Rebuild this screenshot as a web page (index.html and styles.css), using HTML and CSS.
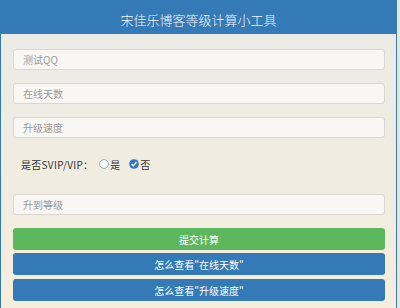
FILE: index.html
```html
<!DOCTYPE html>
<html lang="zh-CN">
<head>
  <meta charset="UTF-8" />
  <title>宋佳乐博客等级计算小工具</title>
  <link rel="stylesheet" href="styles.css">
</head>
<body>
  <div class="panel">
    <div class="panel-heading">宋佳乐博客等级计算小工具</div>
    <div class="panel-body">
      <input class="field" type="text" placeholder="测试QQ">
      <input class="field" type="text" placeholder="在线天数">
      <input class="field" type="text" placeholder="升级速度">
      <div class="vip-row">
        <span class="vip-label">是否SVIP/VIP：</span>
        <label class="radio">
          <svg width="10" height="10" viewBox="0 0 10 10"><circle cx="5" cy="5" r="4.4" fill="#fff" stroke="#8aa9c8" stroke-width="1"/></svg>
          是
        </label>
        <label class="radio">
          <svg width="10" height="10" viewBox="0 0 10 10"><circle cx="5" cy="5" r="4.8" fill="#2f77c0"/><path d="M2.6 5.1 L4.3 6.8 L7.5 3.2" fill="none" stroke="#fff" stroke-width="1.4"/></svg>
          否
        </label>
      </div>
      <input class="field" type="text" placeholder="升到等级">
      <button class="btn btn-green">提交计算</button>
      <button class="btn btn-blue">怎么查看"在线天数"</button>
      <button class="btn btn-blue">怎么查看"升级速度"</button>
    </div>
  </div>
</body>
</html>
```

FILE: styles.css
```css
body {
  margin: 0;
  background: #ebe6cf;
  font-family: "Noto Sans CJK SC", "Noto Sans", sans-serif;
}
.panel {
  width: 395px;
  height: 308px;
  border: 1px solid #337ab7;
  border-bottom: none;
  background: linear-gradient(#eaeae6, #f6eedc);
}
.panel-heading {
  height: 34px;
  margin: -1px -1px 0 -1px;
  background: #337ab7;
  color: #f4f7fb;
  font-size: 13px;
  font-weight: 300;
  line-height: 40px;
  text-align: center;
}
.panel-body {
  padding: 15px 11px 0 12px;
}
.field {
  display: block;
  width: 100%;
  height: 21px;
  margin: 0 0 13px 0;
  padding: 0 9px;
  box-sizing: border-box;
  border: 1px solid #d9d7d2;
  border-radius: 3px;
  background: #f9f7f4;
  font-family: inherit;
  font-size: 10px;
  color: #555;
}
.field::placeholder {
  color: #999;
}
.vip-row {
  display: flex;
  align-items: center;
  height: 20px;
  margin: 16px 0 20px 0;
  padding-left: 8px;
  font-size: 10px;
  color: #333;
}
.vip-label {
  margin-right: 6px;
  letter-spacing: 0.3px;
}
.radio {
  display: flex;
  align-items: center;
  gap: 1px;
  margin-right: 9px;
}
.btn {
  display: block;
  width: 100%;
  height: 22px;
  margin: 0 0 3px 0;
  border: none;
  border-radius: 3px;
  color: #fff;
  font-family: inherit;
  font-size: 10px;
  cursor: pointer;
}
.btn-green {
  background: #5cb85c;
}
.btn-blue {
  background: #337ab7;
  margin-bottom: 4px;
}
```
